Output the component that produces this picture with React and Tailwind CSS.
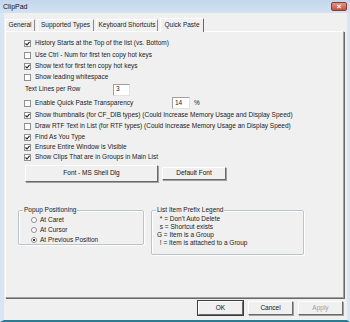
import React from "react";

const checks = [
  { label: "History Starts at the Top of the list (vs. Bottom)", checked: true, h: "h-[12px]" },
  { label: "Use Ctrl - Num for first ten copy hot keys", checked: false, h: "h-[12px]" },
  { label: "Show text for first ten copy hot keys", checked: true, h: "h-[11px]" },
  { label: "Show leading whitespace", checked: false, h: "h-[11px]" },
];

const checksLower = [
  { label: "Show thumbnails (for CF_DIB types) (Could Increase Memory Usage and Display Speed)", checked: true, h: "h-[11px]" },
  { label: "Draw RTF Text in List (for RTF types) (Could Increase Memory Usage an Display Speed)", checked: false, h: "h-[11px]" },
  { label: "Find As You Type", checked: true, h: "h-[10px]" },
  { label: "Ensure Entire Window is Visible", checked: true, h: "h-[10px]" },
  { label: "Show Clips That are in Groups in Main List", checked: true, h: "h-[10px]" },
];

const tabs = [
  { label: "General", w: "w-[30px]" },
  { label: "Supported Types", w: "w-[57px]" },
  { label: "Keyboard Shortcuts", w: "w-[62px]" },
];

function Check({ checked, label }) {
  return (
    <div className="flex items-center">
      <span className="w-[7px] h-[7px] border border-[#8e8f8f] bg-white flex items-center justify-center shrink-0">
        {checked && (
          <svg viewBox="0 0 6 6" className="w-[5px] h-[5px]">
            <path d="M0.6 3 L2.4 4.8 L5.5 1" stroke="#1c1c1c" strokeWidth="1.3" fill="none" />
          </svg>
        )}
      </span>
      <span className="ml-[4px] whitespace-nowrap">{label}</span>
    </div>
  );
}

function Radio({ checked, label }) {
  return (
    <div className="flex items-center h-[10px]">
      <span className="w-[6px] h-[6px] rounded-full border border-[#8e8f8f] bg-white flex items-center justify-center shrink-0">
        {checked && <span className="w-[2px] h-[2px] rounded-full bg-black" />}
      </span>
      <span className="ml-[3px] whitespace-nowrap">{label}</span>
    </div>
  );
}

function Button({ children, className = "", isDefault = false, disabled = false }) {
  return (
    <div
      className={`flex items-center justify-center bg-[#f0f0f0] border border-t-white border-l-white border-r-[#696969] border-b-[#696969] ${
        isDefault ? "outline outline-1 outline-[#3c3c3c]" : "shadow-[1px_1px_0_#a0a0a0]"
      } ${disabled ? "text-[#a0a0a0]" : "text-[#111]"} ${className}`}
    >
      {children}
    </div>
  );
}

export default function App() {
  return (
    <div className="w-[350px] h-[322px] flex flex-col bg-[#f0f0f0] text-[#1a1a1a] text-[6.5px] leading-none font-['Liberation_Sans',Arial,sans-serif] overflow-hidden">
      {/* title bar */}
      <div className="h-[13px] flex items-center justify-between bg-gradient-to-b from-[#c3d7ec] to-[#d3e2f2] pl-[3px] pr-[3px]">
        <span className="text-[7px] text-[#111]">ClipPad</span>
        <div className="w-[16px] h-[9px] rounded-[2px] bg-gradient-to-b from-[#e0958a] to-[#c74f3f] border border-[#8e3a30] flex items-center justify-center">
          <svg viewBox="0 0 8 6" className="w-[6px] h-[5px]">
            <path d="M1.5 0.8 L6.5 5.2 M6.5 0.8 L1.5 5.2" stroke="white" strokeWidth="1.4" />
          </svg>
        </div>
      </div>

      <div className="flex-1 flex flex-col border-l-[4px] border-r-[3px] border-b-[2px] border-l-[#d8e5f2] border-r-[#d8e5f2] border-b-[#2a7c92]">
        <div className="flex-1 flex flex-col pl-[1px] pr-[3px]">
          {/* tabs */}
          <div className="h-[18px] flex items-end gap-[2px]">
            {tabs.map((t) => (
              <div
                key={t.label}
                className={`${t.w} h-[12px] flex items-center justify-center border-t border-l border-r border-t-white border-l-white border-r-[#8a8a8a] rounded-t-[1px] whitespace-nowrap`}
              >
                {t.label}
              </div>
            ))}
            <div className="w-[44px] h-[14px] -mb-[1px] relative z-10 bg-[#f0f0f0] flex items-center justify-center border-t border-l border-r border-t-white border-l-white border-r-[#696969] rounded-t-[1px] whitespace-nowrap">
              Quick Paste
            </div>
          </div>

          {/* panel */}
          <div className="h-[267px] border border-t-white border-l-white border-r-[#a0a0a0] border-b-[#a0a0a0] shadow-[1px_1px_0_#696969] pl-[18px] pt-[5px]">
            {checks.map((c) => (
              <div key={c.label} className={`${c.h} flex items-center`}>
                <Check checked={c.checked} label={c.label} />
              </div>
            ))}
            <div className="h-[13px] flex items-center">
              <span className="w-[89px] pl-[1px]">Text Lines per Row</span>
              <div className="w-[17px] h-[12px] bg-white border border-t-[#a0a0a0] border-l-[#a0a0a0] border-r-[#e3e3e3] border-b-[#e3e3e3] flex items-center pl-[2px]">
                3
              </div>
            </div>
            <div className="h-[14px] flex items-center">
              <div className="w-[148px]">
                <Check checked={false} label="Enable Quick Paste Transparency" />
              </div>
              <div className="w-[18px] h-[12px] bg-white border border-t-[#a0a0a0] border-l-[#a0a0a0] border-r-[#e3e3e3] border-b-[#e3e3e3] flex items-center pl-[2px]">
                14
              </div>
              <span className="ml-[4px]">%</span>
            </div>
            {checksLower.map((c) => (
              <div key={c.label} className={`${c.h} flex items-center`}>
                <Check checked={c.checked} label={c.label} />
              </div>
            ))}

            {/* font buttons */}
            <div className="mt-[3px] flex items-start gap-[4px] pl-[1px]">
              <Button className="w-[133px] h-[17px]">Font - MS Shell Dlg</Button>
              <Button className="w-[64px] h-[13px] mt-[2px]">Default Font</Button>
            </div>

            {/* group boxes */}
            <div className="mt-[28px] -ml-[6px] flex items-start gap-[7px]">
              <div className="w-[126px] h-[35px] border border-[#bcc3c8] shadow-[inset_1px_1px_0_#ffffff,1px_1px_0_#ffffff] rounded-[2px] relative pl-[12px] pt-[4px]">
                <span className="absolute -top-[4px] left-[4px] px-[1px] bg-[#f0f0f0]">Popup Positioning</span>
                <Radio checked={false} label="At Caret" />
                <Radio checked={false} label="At Cursor" />
                <Radio checked={true} label="At Previous Position" />
              </div>
              <div className="w-[153px] h-[45px] border border-[#bcc3c8] shadow-[inset_1px_1px_0_#ffffff,1px_1px_0_#ffffff] rounded-[2px] relative pl-[5px] pt-[5px] flex flex-col gap-[1.5px]">
                <span className="absolute -top-[4px] left-[4px] px-[1px] bg-[#f0f0f0]">List Item Prefix Legend</span>
                <span className="pl-[1px] whitespace-nowrap">{"\u00a0* = Don't Auto Delete"}</span>
                <span className="pl-[1px] whitespace-nowrap">{"\u00a0s = Shortcut exists"}</span>
                <span className="whitespace-nowrap">G = Item is a Group</span>
                <span className="pl-[1px] whitespace-nowrap">{"\u00a0! = Item is attached to a Group"}</span>
              </div>
            </div>
          </div>

          {/* dialog buttons */}
          <div className="mt-[3px] flex justify-end gap-[5px] pr-[1px]">
            <Button isDefault className="w-[45px] h-[14px]">OK</Button>
            <Button className="w-[45px] h-[14px]">Cancel</Button>
            <Button disabled className="w-[45px] h-[14px]">Apply</Button>
          </div>
        </div>
      </div>
    </div>
  );
}
